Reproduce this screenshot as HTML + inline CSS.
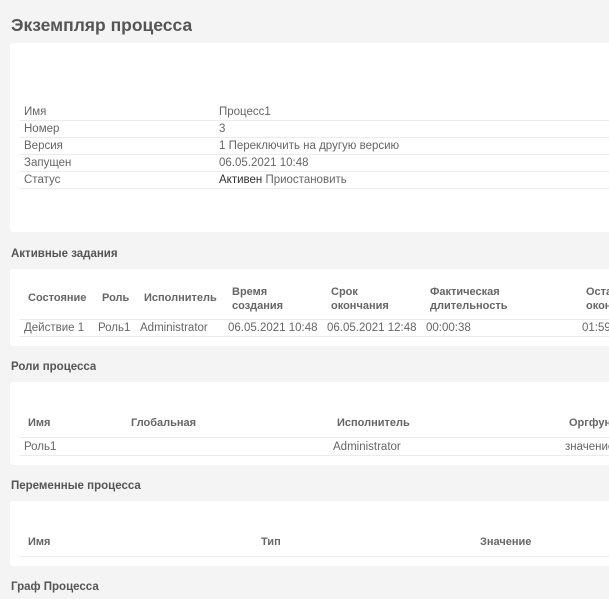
<!DOCTYPE html>
<html><head><meta charset="utf-8"><style>
*{margin:0;padding:0;box-sizing:border-box}
html,body{width:609px;height:599px;overflow:hidden}
body{background:#f4f4f4;font-family:"Liberation Sans",sans-serif;color:#666;font-size:11.5px;position:relative}
.a{position:absolute;white-space:nowrap;line-height:13px;overflow:hidden}
.card{position:absolute;left:10px;right:0;background:#fff;border-radius:3px 0 0 3px}
.ln{position:absolute;left:20px;right:0;height:1px;background:#ececec}
.h{font-weight:bold;color:#555;font-size:11.5px}
.b{font-weight:bold;color:#666;font-size:11px}
.d{color:#333}
</style></head><body>
<div class="a h" style="left:11px;top:15px;font-size:17.5px;line-height:20px">Экземпляр процесса</div>
<div class="card" style="top:43px;height:189px"></div>
<div class="a" style="left:24px;top:106px">Имя</div><div class="a" style="left:219px;top:106px">Процесс1</div>
<div class="ln" style="top:120px"></div>
<div class="a" style="left:24px;top:123px">Номер</div><div class="a" style="left:219px;top:123px">3</div>
<div class="ln" style="top:137px"></div>
<div class="a" style="left:24px;top:140px">Версия</div><div class="a" style="left:219px;top:140px">1 Переключить на другую версию</div>
<div class="ln" style="top:154px"></div>
<div class="a" style="left:24px;top:157px">Запущен</div><div class="a" style="left:219px;top:157px">06.05.2021 10:48</div>
<div class="ln" style="top:171px"></div>
<div class="a" style="left:24px;top:174px">Статус</div><div class="a" style="left:219px;top:174px"><span class="d">Активен</span> Приостановить</div>
<div class="ln" style="top:188px"></div>

<div class="a h" style="left:11px;top:248px">Активные задания</div>
<div class="card" style="top:269px;height:77px"></div>
<div class="a b" style="left:28px;top:292px">Состояние</div>
<div class="a b" style="left:102px;top:292px">Роль</div>
<div class="a b" style="left:144px;top:292px">Исполнитель</div>
<div class="a b" style="left:232px;top:285px;line-height:14px">Время<br>создания</div>
<div class="a b" style="left:331px;top:285px;line-height:14px">Срок<br>окончания</div>
<div class="a b" style="left:430px;top:285px;line-height:14px">Фактическая<br>длительность</div>
<div class="a b" style="left:586px;top:285px;line-height:14px;width:23px">Оставшееся<br>окончания</div>
<div class="ln" style="top:319px"></div>
<div class="a" style="left:24px;top:322px">Действие 1</div>
<div class="a" style="left:98px;top:322px">Роль1</div>
<div class="a" style="left:140px;top:322px">Administrator</div>
<div class="a" style="left:228px;top:322px">06.05.2021 10:48</div>
<div class="a" style="left:327px;top:322px">06.05.2021 12:48</div>
<div class="a" style="left:426px;top:322px">00:00:38</div>
<div class="a" style="left:582px;top:322px;width:27px">01:59:22</div>
<div class="ln" style="top:336px"></div>

<div class="a h" style="left:11px;top:361px">Роли процесса</div>
<div class="card" style="top:382px;height:83px"></div>
<div class="a b" style="left:28px;top:417px">Имя</div>
<div class="a b" style="left:131px;top:417px">Глобальная</div>
<div class="a b" style="left:337px;top:417px">Исполнитель</div>
<div class="a b" style="left:569px;top:417px;width:40px">Оргфункция</div>
<div class="ln" style="top:437px"></div>
<div class="a" style="left:24px;top:441px">Роль1</div>
<div class="a" style="left:333px;top:441px">Administrator</div>
<div class="a" style="left:565px;top:441px;width:44px">значение</div>
<div class="ln" style="top:455px"></div>

<div class="a h" style="left:11px;top:480px">Переменные процесса</div>
<div class="card" style="top:501px;height:65px"></div>
<div class="a b" style="left:28px;top:536px">Имя</div>
<div class="a b" style="left:261px;top:536px">Тип</div>
<div class="a b" style="left:480px;top:536px">Значение</div>
<div class="ln" style="top:556px"></div>

<div class="a h" style="left:11px;top:581px">Граф Процесса</div>
</body></html>
